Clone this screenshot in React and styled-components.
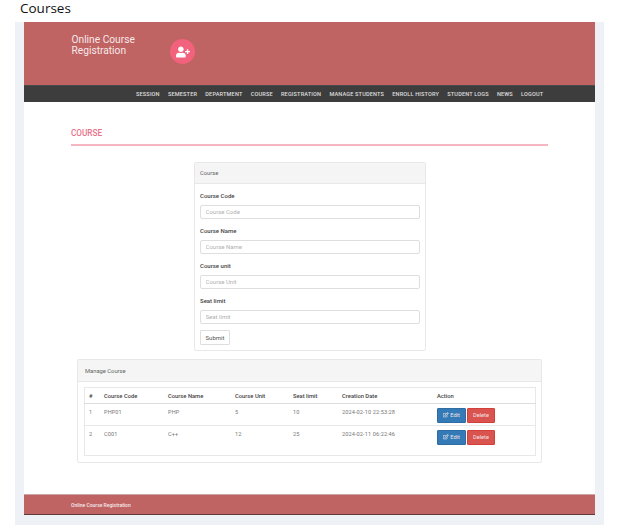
import React from "react";
import styled, { createGlobalStyle } from "styled-components";
import { FaUserPlus, FaRegEdit } from "react-icons/fa";

const Global = createGlobalStyle`
  html, body { margin: 0; padding: 0; background: #fff; overflow: hidden; }
  * { box-sizing: border-box; }
  body { font-family: Roboto, "Liberation Sans", sans-serif; }
`;
const Page = styled.div`width: 622px; height: 525px; overflow: hidden;`;
const PageTitle = styled.h1`
  margin: 0; height: 22px; padding-left: 20px; font: 400 13.5px/16px "Open Sans", sans-serif; color: #111;
`;
const Frame = styled.div`
  margin-left: 15px; width: 589px; height: 503px; padding: 0 9px; background: #eef2f6;
`;
const Sheet = styled.div`
  width: 571px; height: 493px; background: #fff; display: flex; flex-direction: column;
`;
const Header = styled.header`
  height: 63px; background: #bf6363; padding: 13px 0 0 47px; display: flex; align-items: flex-start;
`;
const Brand = styled.div`
  width: 99px; color: #f6e9e9; font-size: 10.2px; line-height: 10.5px; padding-left: .5px;
`;
const Avatar = styled.div`
  width: 25px; height: 25px; margin-top: 4px; border-radius: 50%; background: #f2627d; color: #fff;
  display: flex; align-items: center; justify-content: center; font-size: 14px;
`;
const Nav = styled.nav`
  height: 17px; background: #3d3d3d; border-top: 1px solid #4a4a4a; padding-left: 112px;
  display: flex; align-items: center; gap: 8.2px;
`;
const NavLink = styled.span`
  color: #dedede; font-size: 5.6px; font-weight: 500; text-transform: uppercase; white-space: nowrap; letter-spacing: .14px;
`;
const Main = styled.main`flex: 1; padding: 0 47px; display: flex; flex-direction: column;`;
const Heading = styled.h2`
  margin: 26px 0 0; height: 16px; font-size: 8.2px; line-height: 10px; font-weight: 500; color: #e9718a;
`;
const Rule = styled.div`height: 2px; width: 477px; background: #f5b6c2;`;
const Panel = styled.section`
  background: #fff; border: 1px solid #e8e8e8; border-radius: 2px; flex: none;
  width: ${p => p.$w}px; margin: ${p => p.$m};
`;
const PanelHead = styled.div`
  height: ${p => p.$h}px; background: #f5f5f5; border-bottom: 1px solid #e8e8e8; padding-left: ${p => p.$pad}px;
  display: flex; align-items: center; font-size: 5.8px; color: #666;
`;
const Form = styled.form`padding: 6px 5px 5px; display: flex; flex-direction: column;`;
const Field = styled.label`display: flex; flex-direction: column; margin-bottom: 6px;`;
const LabelText = styled.span`
  height: 14px; font-size: 6px; line-height: 9px; font-weight: 500; color: #444; margin-top: 1px;
`;
const Input = styled.input`
  height: 14px; border: 1px solid #dedede; border-radius: 2px; padding: 0 4.5px 1px; font: 400 6px Roboto, sans-serif; background: #fff;
  &::placeholder { color: #b0b0b0; opacity: 1; }
`;
const Submit = styled.button`
  width: 30px; height: 15px; padding: 0; background: #fff; border: 1px solid #dedede; border-radius: 1px;
  font: 400 6px Roboto, sans-serif; color: #555;
`;
const TableWrap = styled.div`padding: 5px 6px 6px;`;
const Table = styled.table`
  width: 451px; border-collapse: collapse; table-layout: fixed; border: 1px solid #e8e8e8;
`;
const Th = styled.th`
  text-align: left; font-size: 5.8px; font-weight: 500; color: #444; padding: 0 4px; height: 16px; border-bottom: 1px solid #ddd;
`;
const Td = styled.td`
  font-size: 5.6px; line-height: 8px; color: #777; padding: 3.5px 4px 0; vertical-align: top; border-bottom: ${p => p.$last ? 0 : "1px solid #e8e8e8"}; letter-spacing: .1px;
`;
const Actions = styled.div`display: flex; gap: 1px;`;
const ActionButton = styled.button`
  height: 15px; width: ${p => p.$w}px; padding: 0; border: 1px solid ${p => p.$border}; background: ${p => p.$bg}; color: #f3e6e6; border-radius: 1px;
  font: 400 5.6px Roboto, sans-serif; display: flex; align-items: center; justify-content: center; gap: 1.5px;
`;
const Footer = styled.footer`
  height: 21px; background: #bf6363; border-top: 1px solid #c9a5a5; border-bottom: 1px solid #5c3a3a;
  padding-left: 47px; display: flex; align-items: center; color: #f6e9e9; font-size: 5px; font-weight: 500;
`;

const links = ["Session","Semester","Department","Course","Registration","Manage Students","Enroll History","Student Logs","News","Logout"];
const rows = [
  { n: "1", code: "PHP01", name: "PHP", unit: "5", seat: "10", date: "2024-02-10 22:53:28", h: 22 },
  { n: "2", code: "C001", name: "C++", unit: "12", seat: "25", date: "2024-02-11 06:22:46", h: 30, last: true },
];
const cols = [15.5, 64, 67, 58, 49, 95, 102.5];
const fields = [
  ["Course Code","Course Code"],["Course Name","Course Name"],["Course unit","Course Unit"],["Seat limit","Seat limit"],
];

export default function App() {
  return (
    <Page>
      <Global />
      <PageTitle>Courses</PageTitle>
      <Frame>
        <Sheet>
          <Header>
            <Brand>Online Course<br />Registration</Brand>
            <Avatar><FaUserPlus /></Avatar>
          </Header>
          <Nav>{links.map(l => <NavLink key={l}>{l}</NavLink>)}</Nav>
          <Main>
            <Heading>COURSE</Heading>
            <Rule />
            <Panel $w={232} $m="16px 0 0 123px">
              <PanelHead $h={21} $pad={5}>Course</PanelHead>
              <Form onSubmit={e => e.preventDefault()}>
                {fields.map(([l, p]) => (
                  <Field key={l}>
                    <LabelText>{l}</LabelText>
                    <Input placeholder={p} />
                  </Field>
                ))}
                <Submit>Submit</Submit>
              </Form>
            </Panel>
            <Panel $w={465} $m="8px 0 0 6px">
              <PanelHead $h={22} $pad={7}>Manage Course</PanelHead>
              <TableWrap>
                <Table>
                  <colgroup>{cols.map((c, i) => <col key={i} style={{ width: c }} />)}</colgroup>
                  <thead>
                    <tr>
                      {["#","Course Code","Course Name","Course Unit","Seat limit","Creation Date","Action"].map(h => <Th key={h}>{h}</Th>)}
                    </tr>
                  </thead>
                  <tbody>
                    {rows.map(r => (
                      <tr key={r.n} style={{ height: r.h }}>
                        {[r.n, r.code, r.name, r.unit, r.seat, r.date].map((v, i) => <Td key={i} $last={r.last}>{v}</Td>)}
                        <Td $last={r.last}>
                          <Actions>
                            <ActionButton $w={29} $bg="#337ab7" $border="#2e6da4"><FaRegEdit /> Edit</ActionButton>
                            <ActionButton $w={28} $bg="#d9534f" $border="#d43f3a">Delete</ActionButton>
                          </Actions>
                        </Td>
                      </tr>
                    ))}
                  </tbody>
                </Table>
              </TableWrap>
            </Panel>
          </Main>
          <Footer>Online Course Registration</Footer>
        </Sheet>
      </Frame>
    </Page>
  );
}
